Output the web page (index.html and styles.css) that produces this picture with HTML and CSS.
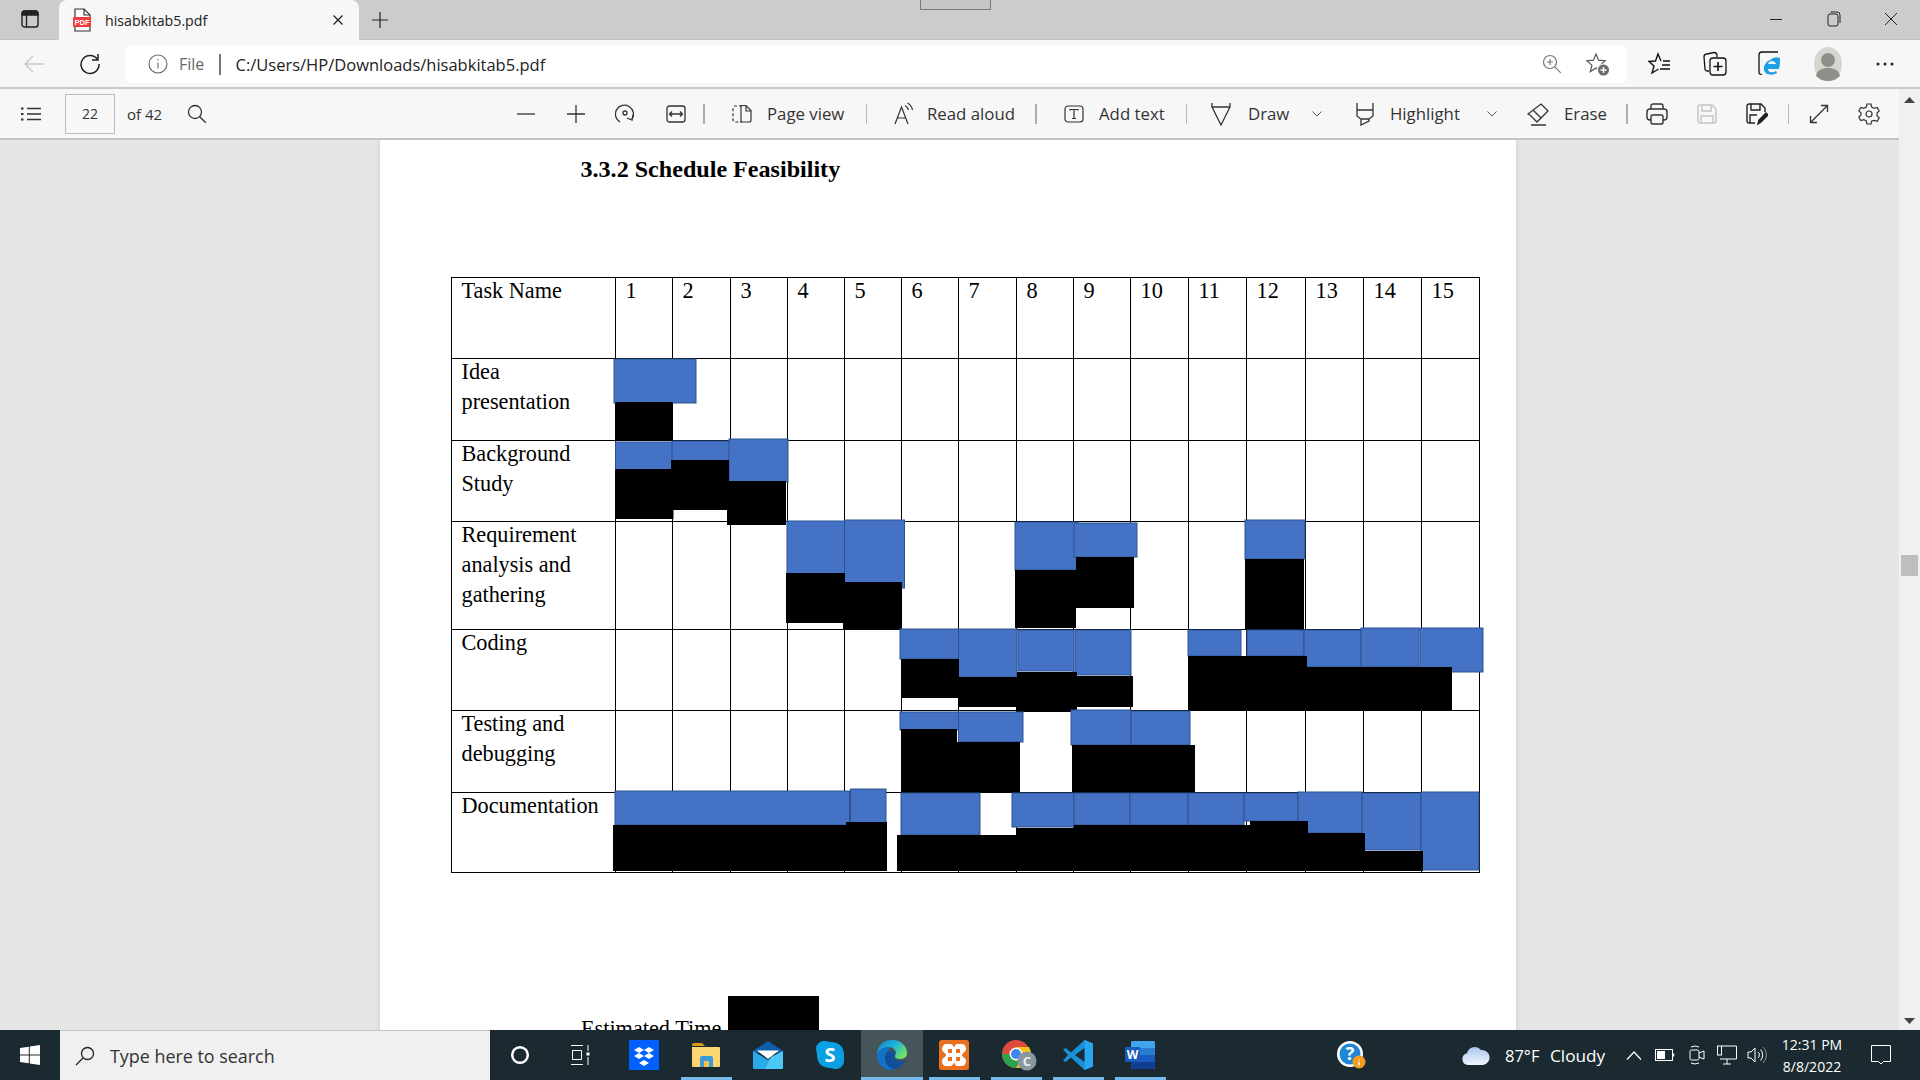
FILE: index.html
```html
<!DOCTYPE html>
<html lang="en">
<head>
<meta charset="utf-8">
<title>hisabkitab5.pdf</title>
<link rel="stylesheet" href="styles.css">
</head>
<body>
<div class="window">
  <header class="tabstrip">
    <div class="tab-toggle">
      <svg width="18" height="18" viewBox="0 0 18 18" fill="none" stroke="#222" stroke-width="1.4"><rect x="1" y="1" width="16" height="16" rx="2.5"/><path d="M5.5 5v12"/><path d="M1 3.5a2.5 2.5 0 0 1 2.5-2.5h11A2.5 2.5 0 0 1 17 3.5V5H1z" fill="#222"/></svg>
    </div>
    <div class="tab">
      <svg class="tab-icon" width="20" height="24" viewBox="0 0 20 24"><path d="M3 1h9l6 6v16H3z" fill="#fff" stroke="#333" stroke-width="1.2"/><path d="M12 1v6h6" fill="none" stroke="#333" stroke-width="1.2"/><rect x="1" y="9" width="18" height="10" rx="1" fill="#ee3b3b"/><text x="10" y="17" class="pdf-mark">PDF</text></svg>
      <span class="tab-title">hisabkitab5.pdf</span>
      <svg class="tab-close" width="12" height="12" viewBox="0 0 12 12" stroke="#222" stroke-width="1.3"><path d="M1.5 1.5l9 9M10.500 1.500l-9 9"/></svg>
    </div>
    <svg class="new-tab" width="18" height="18" viewBox="0 0 18 18" stroke="#222" stroke-width="1.2"><path d="M9 1v16M1 9h16"/></svg>
    <div class="snap-handle"></div>
    <div class="win-controls">
      <svg width="14" height="14" viewBox="0 0 14 14" stroke="#222" stroke-width="1"><path d="M1 7.500h12"/></svg>
      <svg width="14" height="16" viewBox="0 0 14 16" fill="none" stroke="#222" stroke-width="1"><rect x="1" y="3" width="10" height="12" rx="2"/><path d="M3.500 1h6.500a3 3 0 0 1 3 3v8"/></svg>
      <svg width="14" height="14" viewBox="0 0 14 14" stroke="#222" stroke-width="1"><path d="M1 1l12 12M13 1L1 13"/></svg>
    </div>
  </header>

  <nav class="navbar">
    <svg class="nav-back" width="22" height="20" viewBox="0 0 22 20" fill="none" stroke="#c9c9c9" stroke-width="1.4"><path d="M21 10H2M10 2l-8 8 8 8"/></svg>
    <svg class="nav-reload" width="22" height="22" viewBox="0 0 22 22" fill="none" stroke="#222" stroke-width="1.5"><path d="M18.500 6.500A9 9 0 1 0 20 11"/><path d="M13 7h6V1"/></svg>
    <div class="address">
      <svg class="addr-info" width="20" height="20" viewBox="0 0 20 20" fill="none" stroke="#666" stroke-width="1.1"><circle cx="10" cy="10" r="9"/><path d="M10 8.500v6"/><path d="M10 5v1.500"/></svg>
      <span class="addr-file">File</span>
      <span class="addr-sep"></span>
      <span class="addr-url">C:/Users/HP/Downloads/hisabkitab5.pdf</span>
      <svg class="addr-zoom" width="20" height="20" viewBox="0 0 20 20" fill="none" stroke="#777" stroke-width="1.2"><circle cx="8" cy="8" r="6.500"/><path d="M12.800 12.800l6 6M8 5v6M5 8h6"/></svg>
      <svg class="addr-star" width="24" height="24" viewBox="0 0 24 24" fill="none" stroke="#555" stroke-width="1.2"><path d="M10 2l2.600 6.200 6.600.5-5 4.400 1.600 6.500L10 16l-5.700 3.600 1.600-6.500-5-4.400 6.600-.5z"/><circle cx="17.500" cy="18" r="6.500" fill="#f7f7f7" stroke="none"/><circle cx="17.500" cy="18" r="5.500" fill="#6b6b6b" stroke="none"/><path d="M17.500 15v6M14.500 18h6" stroke="#fff" stroke-width="1.4"/></svg>
    </div>
    <div class="nav-tools">
      <svg width="24" height="24" viewBox="0 0 24 24" fill="none" stroke="#111" stroke-width="1.4"><path d="M13 9L10 2 7.500 9 1 9.500l5 4.500-2 7 6.500-4"/><path d="M15 9h7M14 13h8M12 17h10"/></svg>
      <svg width="24" height="26" viewBox="0 0 24 26" fill="none" stroke="#111" stroke-width="1.3"><path d="M6 20H4a2 2 0 0 1-2-2L1 6a3 3 0 0 1 3-3l7-1.500a3 3 0 0 1 3 2V6"/><rect x="7" y="7" width="16" height="17" rx="3"/><path d="M15 11v9M10.500 15.500h9" stroke-width="1.6"/></svg>
      <svg width="24" height="26" viewBox="0 0 24 26" fill="none"><path d="M4 23a2 2 0 0 1-3-2V4a3 3 0 0 1 3-3h16" stroke="#111" stroke-width="1.3"/><path d="M22 7a10 10 0 0 0-10 2 9 9 0 0 0-6 10c1 5 8 6 13 3l-1-2c-3 2-8 2-8-2h11c1-4 1-8 1-11zM10 13c1-4 7-4 8 0z" fill="#1b9fe8" fill-rule="evenodd"/></svg>
      <svg class="avatar" width="30" height="34" viewBox="0 0 30 34"><ellipse cx="15" cy="17" rx="14" ry="17" fill="#d6d6d0"/><circle cx="15" cy="13" r="7" fill="#8f8f8a"/><path d="M3 29c1-6 6-8 12-8s11 2 12 8c-3 3-7 5-12 5S6 32 3 29z" fill="#8f8f8a"/></svg>
      <svg class="nav-more" width="18" height="4" viewBox="0 0 18 4" fill="#222"><circle cx="2" cy="2" r="1.500"/><circle cx="9" cy="2" r="1.500"/><circle cx="16" cy="2" r="1.500"/></svg>
    </div>
  </nav>

  <div class="content-row">
    <div class="content-col">
      <div class="pdfbar">
        <svg class="pb-list" width="20" height="14" viewBox="0 0 20 14" stroke="#333" stroke-width="1.300"><path d="M6 1.500h14M6 7h14M6 12.500h14"/><path d="M0 1.500h2.500M0 7h2.500M0 12.500h2.500" stroke-width="2"/></svg>
        <div class="page-box">22</div>
        <span class="page-of">of 42</span>
        <svg class="pb-search" width="20" height="20" viewBox="0 0 20 20" fill="none" stroke="#333" stroke-width="1.300"><circle cx="8" cy="8" r="6.500"/><path d="M12.800 12.800l6 6"/></svg>

        <svg class="pb-minus" width="18" height="2" viewBox="0 0 18 2" stroke="#333" stroke-width="1.300"><path d="M0 1h18"/></svg>
        <svg class="pb-plus" width="18" height="18" viewBox="0 0 18 18" stroke="#333" stroke-width="1.300"><path d="M0 9h18M9 0v18"/></svg>
        <svg class="pb-rotate" width="20" height="22" viewBox="0 0 20 22" fill="none" stroke="#333" stroke-width="1.300"><path d="M5 19A9 9 0 1 1 17 16"/><circle cx="10" cy="10" r="2"/><path d="M12 15l5 2 1-5"/></svg>
        <svg class="pb-fit" width="20" height="18" viewBox="0 0 20 18" fill="none" stroke="#333" stroke-width="1.300"><rect x="1" y="1" width="18" height="16" rx="2.500"/><path d="M4 9h12M6 6.500L3.500 9 6 11.500M14 6.500L16.500 9 14 11.500"/></svg>
        <span class="tb-sep tb-sep-strong sep-a"></span>

        <div class="tool">
          <svg width="20" height="20" viewBox="0 0 20 20" fill="none" stroke="#333" stroke-width="1.200"><path d="M10 2H3a2 2 0 0 0-2 2v12a2 2 0 0 0 2 2h7" stroke-dasharray="3 2"/><path d="M9 1.500h5l5 5V16a2 2 0 0 1-2 2H9zM14 1.500V7h5"/></svg>
          <span class="tool-label w-page">Page view</span>
        </div>
        <span class="tb-sep"></span>
        <div class="tool tool-read">
          <svg width="20" height="24" viewBox="0 0 20 24" fill="none" stroke="#333" stroke-width="1.200"><path d="M1 22L7.500 5 14 22M3.500 16h8"/><path d="M11 3.500c2 1 3 2.500 3.500 4.500M13.500 1c2.500 1.500 4.500 4 5 7"/></svg>
          <span class="tool-label w-read">Read aloud</span>
        </div>
        <span class="tb-sep tb-sep-strong"></span>
        <div class="tool">
          <svg width="20" height="18" viewBox="0 0 20 18" fill="none" stroke="#333" stroke-width="1.200"><rect x="1" y="1" width="18" height="16" rx="3"/><path d="M6 5.500V4.500h8v1M10 4.500v9M8 13.500h4"/></svg>
          <span class="tool-label w-add">Add text</span>
        </div>
        <span class="tb-sep"></span>
        <div class="tool tool-split tool-draw">
          <svg width="20" height="24" viewBox="0 0 20 24" fill="none" stroke="#333" stroke-width="1.300"><path d="M1 1v4h18V1M1 5l9 18 9-18"/></svg>
          <span class="tool-label w-draw">Draw</span>
        </div>
        <svg class="chev" width="10" height="6" viewBox="0 0 10 6" fill="none" stroke="#555" stroke-width="1"><path d="M.5.500L5 5 9.500.500"/></svg>
        <div class="tool tool-split tool-hl">
          <svg width="20" height="24" viewBox="0 0 20 24" fill="none" stroke="#333" stroke-width="1.300"><path d="M2 1v7h16V1M2 8v6l4 3v6l8-4v-2l4-3V8M6 17h8"/></svg>
          <span class="tool-label w-high">Highlight</span>
        </div>
        <svg class="chev" width="10" height="6" viewBox="0 0 10 6" fill="none" stroke="#555" stroke-width="1"><path d="M.5.500L5 5 9.500.500"/></svg>
        <div class="tool tool-erase">
          <svg width="22" height="24" viewBox="0 0 22 24" fill="none" stroke="#333" stroke-width="1.300"><path d="M14 2l7 7-11 11-7-7-2-1zM6 8l8 8M4 23h15"/></svg>
          <span class="tool-label w-erase">Erase</span>
        </div>
        <span class="tb-sep tb-sep-strong"></span>
        <svg class="pb-print" width="22" height="22" viewBox="0 0 22 22" fill="none" stroke="#333" stroke-width="1.400"><path d="M5 6V3a2 2 0 0 1 2-2h8a2 2 0 0 1 2 2v3"/><rect x="1" y="6" width="20" height="11" rx="3"/><rect x="5" y="12" width="12" height="9" rx="1.500" fill="#f7f7f7"/></svg>
        <svg class="pb-save" width="20" height="20" viewBox="0 0 20 20" fill="none" stroke="#c4c4c4" stroke-width="1.400"><path d="M1 3a2 2 0 0 1 2-2h12l4 4v12a2 2 0 0 1-2 2H3a2 2 0 0 1-2-2zM5 1v6h9V1M4 19v-7h12v7"/></svg>
        <svg class="pb-saveas" width="22" height="22" viewBox="0 0 22 22" fill="none" stroke="#222" stroke-width="1.400"><path d="M9 20H3a2 2 0 0 1-2-2V3a2 2 0 0 1 2-2h12l4 4v4M5 1v6h9V1M4 20v-8h7"/><path d="M12 21l1-4 7-7 2 2-7 7z" fill="#222"/></svg>
        <span class="tb-sep sep-b"></span>
        <svg class="pb-expand" width="20" height="20" viewBox="0 0 20 20" fill="none" stroke="#333" stroke-width="1.300"><path d="M1.500 18.500l17-17M12 1.500h6.500V8M1.500 12v6.500H8"/></svg>
        <svg class="pb-gear" width="22" height="22" viewBox="0 0 22 22" fill="none" stroke="#333" stroke-width="1.200"><path d="M9 1h4l.7 3 2.500 1.400 3-.9 2 3.400-2.200 2.100v2.800l2.200 2.100-2 3.400-3-.9L13.700 18 13 21H9l-.7-3-2.500-1.400-3 .9-2-3.400L3 12V9.900L.8 7.800l2-3.400 3 .9L8.300 4z"/><circle cx="11" cy="11" r="3"/></svg>
      </div>

      <main class="viewer">
        <article class="page">
          <h2 class="page-heading">3.3.2 Schedule Feasibility</h2>
          <div class="gantt">
            <table class="gantt-table">
              <colgroup>
                <col class="c164"><col class="c57"><col class="c58"><col class="c57"><col class="c57"><col class="c57"><col class="c57"><col class="c58"><col class="c57"><col class="c57"><col class="c58"><col class="c58"><col class="c59"><col class="c58"><col class="c58"><col class="c58">
              </colgroup>
              <tr class="r81"><td>Task Name</td><td>1</td><td>2</td><td>3</td><td>4</td><td>5</td><td>6</td><td>7</td><td>8</td><td>9</td><td>10</td><td>11</td><td>12</td><td>13</td><td>14</td><td>15</td></tr>
              <tr class="r82"><td>Idea presentation</td><td></td><td></td><td></td><td></td><td></td><td></td><td></td><td></td><td></td><td></td><td></td><td></td><td></td><td></td><td></td></tr>
              <tr class="r81"><td>Background Study</td><td></td><td></td><td></td><td></td><td></td><td></td><td></td><td></td><td></td><td></td><td></td><td></td><td></td><td></td><td></td></tr>
              <tr class="r108"><td>Requirement analysis and gathering</td><td></td><td></td><td></td><td></td><td></td><td></td><td></td><td></td><td></td><td></td><td></td><td></td><td></td><td></td><td></td></tr>
              <tr class="r81"><td>Coding</td><td></td><td></td><td></td><td></td><td></td><td></td><td></td><td></td><td></td><td></td><td></td><td></td><td></td><td></td><td></td></tr>
              <tr class="r82"><td>Testing and debugging</td><td></td><td></td><td></td><td></td><td></td><td></td><td></td><td></td><td></td><td></td><td></td><td></td><td></td><td></td><td></td></tr>
              <tr class="r80"><td>Documentation</td><td></td><td></td><td></td><td></td><td></td><td></td><td></td><td></td><td></td><td></td><td></td><td></td><td></td><td></td><td></td></tr>
            </table>
            <svg class="gantt-bars" width="1029" height="595" viewBox="451 277 1029 595">
              <g class="bar-plan">
                <rect x="614" y="359" width="82" height="44"/>
                <rect x="615.500" y="442" width="57" height="28"/><rect x="672" y="441" width="58" height="20"/><rect x="729" y="439" width="59" height="43"/>
                <rect x="787" y="521" width="58" height="53"/><rect x="844.500" y="520" width="60" height="68"/>
                <rect x="1015" y="522" width="63" height="48"/><rect x="1074" y="523" width="63" height="34"/><rect x="1245" y="520" width="60" height="39"/>
              </g>
              <g class="bar-done">
                <rect x="615.500" y="402" width="57" height="39"/>
                <rect x="615.500" y="469" width="58" height="50"/><rect x="671" y="460" width="58" height="50"/><rect x="727" y="481" width="59" height="44"/>
                <rect x="786" y="573" width="59" height="50"/><rect x="843" y="582" width="59" height="48"/>
                <rect x="1015" y="570" width="61" height="58"/><rect x="1076" y="557" width="58" height="51"/><rect x="1245" y="559" width="59" height="70"/>
              </g>
              <g class="bar-plan">
                <rect x="900" y="629" width="58.500" height="30"/><rect x="958.500" y="629" width="58.500" height="48"/><rect x="1018" y="630" width="56" height="41"/><rect x="1075" y="630" width="56" height="45"/>
                <rect x="1188" y="630" width="53" height="26"/><rect x="1247" y="630" width="57" height="26"/><rect x="1304" y="630" width="57" height="37"/><rect x="1361" y="628" width="58" height="39"/><rect x="1420" y="628" width="63" height="44"/>
              </g>
              <g class="bar-done">
                <rect x="901" y="659" width="58" height="39"/><rect x="958" y="677" width="59" height="30"/><rect x="1017" y="672" width="60" height="40"/><rect x="1076" y="676" width="57" height="31"/>
                <rect x="1188" y="656" width="119" height="55"/><rect x="1307" y="667" width="145" height="44"/>
              </g>
              <g class="bar-plan">
                <rect x="900" y="712" width="58.500" height="18"/><rect x="958.500" y="712" width="64.500" height="30"/><rect x="1071" y="710" width="60" height="35"/><rect x="1131" y="711" width="59" height="34"/>
              </g>
              <g class="bar-done">
                <rect x="901" y="729" width="56" height="64"/><rect x="957" y="742" width="63" height="51"/><rect x="1072" y="745" width="123" height="50"/>
              </g>
              <g class="bar-plan">
                <rect x="615" y="791" width="234.500" height="34"/><rect x="850.500" y="789" width="35.500" height="34"/><rect x="901" y="793" width="79" height="42"/>
                <rect x="1012" y="793" width="62" height="34"/><rect x="1074" y="793" width="56" height="32"/><rect x="1130" y="793" width="58" height="32"/><rect x="1188" y="793" width="56" height="32"/><rect x="1244" y="793" width="54" height="28"/><rect x="1298" y="792" width="64" height="41"/><rect x="1362" y="793" width="59" height="57"/><rect x="1421" y="792" width="58" height="78"/>
              </g>
              <g class="bar-done">
                <rect x="613" y="825" width="235" height="46"/><rect x="846" y="822" width="41" height="49"/><rect x="897" y="835" width="126" height="36"/>
                <rect x="1016" y="828" width="58" height="43"/><rect x="1074" y="825" width="176" height="46"/><rect x="1250" y="821" width="58" height="50"/><rect x="1308" y="833" width="57" height="38"/><rect x="1365" y="851" width="58" height="20"/>
              </g>
            </svg>
          </div>
          <div class="estimate">
            <span class="estimate-label">Estimated Time</span>
            <span class="estimate-box"></span>
          </div>
        </article>
      </main>
    </div>
    <aside class="scrollbar">
      <svg width="11" height="6" viewBox="0 0 11 6" fill="#444"><path d="M0 6L5.500 0 11 6z"/></svg>
      <div class="scroll-thumb"></div>
      <svg width="11" height="6" viewBox="0 0 11 6" fill="#444"><path d="M0 0l5.500 6L11 0z"/></svg>
    </aside>
  </div>

  <footer class="taskbar">
    <div class="start">
      <svg width="20" height="20" viewBox="0 0 20 20" fill="#fff"><path d="M0 3l8.800-1.300v7.800H0zM9.800 1.500L20 0v9.500H9.800zM0 10.500h8.800v7.800L0 17zM9.800 10.500H20V20L9.800 18.500z"/></svg>
    </div>
    <div class="searchbox">
      <svg width="20" height="20" viewBox="0 0 20 20" fill="none" stroke="#222" stroke-width="1.300"><circle cx="12.500" cy="7.500" r="6"/><path d="M8 12L1 19"/></svg>
      <span>Type here to search</span>
    </div>
    <div class="slot slot-60">
      <svg width="20" height="20" viewBox="0 0 20 20" fill="none" stroke="#fff" stroke-width="2.500"><circle cx="10" cy="10" r="7.800"/></svg>
    </div>
    <div class="slot slot-60">
      <svg width="20" height="22" viewBox="0 0 20 22" fill="none" stroke="#fff" stroke-width="1"><path d="M1 1.500h12M1 20.500h12M2.500 6.500h9v9h-9zM18 1v6M18 13v8"/><rect x="16.500" y="8.500" width="3" height="3" fill="#fff" stroke="none"/></svg>
    </div>
    <div class="slot app app-first">
      <svg width="30" height="30" viewBox="0 0 30 30"><rect width="30" height="30" fill="#0061fe"/><path d="M10 7l5 3-5 3-5-3zM20 7l5 3-5 3-5-3zM10 13l5 3-5 3-5-3zM20 13l5 3-5 3-5-3zM15 20l5 3-5 3-5-3z" fill="#fff"/></svg>
    </div>
    <div class="slot app is-open">
      <svg width="30" height="26" viewBox="0 0 30 26"><path d="M1 3a2 2 0 0 1 2-2h8l3 3h-13z" fill="#d89a14"/><path d="M1 5h27a1 1 0 0 1 1 1v18a1 1 0 0 1-1 1H2a1 1 0 0 1-1-1z" fill="#fcd670"/><path d="M9 25v-9a2 2 0 0 1 2-2h9a2 2 0 0 1 2 2v9h-4v-6h-5v6z" fill="#3f9ad9"/><rect x="13" y="19" width="5" height="6" fill="#f2c14e"/></svg>
    </div>
    <div class="slot app">
      <svg width="30" height="28" viewBox="0 0 30 28"><path d="M15 0L0 10v2h30v-2z" fill="#0f5fa8"/><path d="M4 9.500h22L15 18z" fill="#fff"/><path d="M0 10l15 9 15-9v17a1 1 0 0 1-1 1H1a1 1 0 0 1-1-1z" fill="#2aa9e8"/><path d="M30 10v17a1 1 0 0 1-1 1H12l6-12z" fill="#4cc8f5"/></svg>
    </div>
    <div class="slot app">
      <svg width="28" height="28" viewBox="0 0 28 28"><path d="M9 0c3 0 3 1 6 1 8 0 13 5 13 13 0 3 0 4 0 6a8 8 0 0 1-9 8c-2 0-3-1-5-1C6 27 1 22 1 14c0-3-1-4-1-6a8 8 0 0 1 9-8z" fill="#0b9fe3"/><text x="14" y="21" class="skype-mark">S</text></svg>
    </div>
    <div class="slot app is-open is-active">
      <svg width="30" height="30" viewBox="0 0 30 30"><defs><linearGradient id="edgeA" x1="0" y1="0" x2="1" y2=".6"><stop offset="0" stop-color="#1a80d0"/><stop offset=".55" stop-color="#1cb4d8"/><stop offset="1" stop-color="#6fe06a"/></linearGradient></defs><path d="M15 0c9 0 15 6 15 13 0 4-3 6-7 6-3 0-5-1-5-3 0-1 1-2 1-3 0-3-3-6-7-6C6 7 0 12 0 15 0 6 6 0 15 0z" fill="url(#edgeA)"/><path d="M0 15c0-4 5-8 12-8 2 2-4 5-4 11 0 6 5 11 11 11-1 .5-3 1-5 1C6 30 0 23 0 15z" fill="#1172c9"/><path d="M8 18c0-5 4-8 8-7 2 1 2 2 2 3s-1 2-1 3c0 3 3 4 6 4 3 0 5-1 6-2-2 5-6 9-11 10-6 0-10-5-10-11z" fill="#0f4e9c"/></svg>
    </div>
    <div class="slot app is-open">
      <svg width="30" height="30" viewBox="0 0 30 30"><rect width="30" height="30" rx="2.500" fill="#e8701f"/><path d="M7 4h5c2 0 2 3 3 3s1-3 3-3h5c3 0 4 3 4 5 0 3-4 4-4 6s4 3 4 6-2 5-4 5h-5c-2 0-2-3-3-3s-1 3-3 3H7c-3 0-4-3-4-5 0-3 4-4 4-6S3 12 3 9s2-5 4-5z" fill="#fff"/><path d="M9 9h4v4H9zM17 9h4v4h-4zM9 17h4v4H9zM17 17h4v4h-4z" fill="#e8701f"/></svg>
    </div>
    <div class="slot app is-open">
      <svg class="chrome" width="36" height="32" viewBox="0 0 36 32"><circle cx="15" cy="15" r="14" fill="#de4b3e"/><path d="M15 15L1 15a14 14 0 0 0 14 14l7-12z" fill="#2ca24c"/><path d="M15 8h13a14 14 0 0 1-13 21l7-12z" fill="#f5c21b"/><circle cx="15" cy="15" r="6.500" fill="#fff"/><circle cx="15" cy="15" r="5" fill="#4285f4"/><circle cx="26" cy="22" r="9.500" fill="#8a979f"/><text x="26" y="27" class="chrome-mark">C</text></svg>
    </div>
    <div class="slot app is-open">
      <svg width="30" height="30" viewBox="0 0 30 30"><path d="M21.500 0L30 3.500v23L21.500 30 8 17.500 2.500 22 0 20.500 5 15 0 9.500 2.500 8 8 12.500z" fill="#1a8fd9"/><path d="M21.500 0L30 3.500v23L21.500 30z" fill="#2aa6ee"/><path d="M21.500 8v14L12 15z" fill="#1b2a30"/></svg>
    </div>
    <div class="slot app is-open">
      <svg width="30" height="28" viewBox="0 0 30 28"><rect x="6" y="0" width="24" height="28" rx="1.500" fill="#41a5ee"/><rect x="6" y="7" width="24" height="7" fill="#2b7cd3"/><rect x="6" y="14" width="24" height="7" fill="#185abd"/><path d="M6 21h24v5.500a1.500 1.500 0 0 1-1.500 1.500h-21A1.500 1.500 0 0 1 6 26.500z" fill="#103f91"/><rect x="0" y="6" width="15" height="15" rx="1" fill="#185abd"/><text x="7.500" y="18" class="word-mark">W</text></svg>
    </div>
    <div class="tray">
      <div class="tray-help">
        <svg width="30" height="32" viewBox="0 0 30 32"><circle cx="14" cy="15" r="13" fill="#fff"/><circle cx="14" cy="15" r="10.500" fill="#1e88d6"/><text x="14" y="21" class="help-mark">?</text><circle cx="23" cy="23" r="6.500" fill="#f39c1f"/><path d="M23 20.500v1M23 23v3.500" stroke="#fff" stroke-width="1.500"/></svg>
      </div>
      <svg class="tray-cloud" width="28" height="20" viewBox="0 0 28 20"><defs><linearGradient id="cloudA" x1="0" y1="0" x2="0" y2="1"><stop offset="0" stop-color="#a9c7f2"/><stop offset="1" stop-color="#f1f5fb"/></linearGradient></defs><path d="M6 20a6 6 0 0 1-1-11.800A8 8 0 0 1 19 5a7.500 7.500 0 1 1 2 15z" fill="url(#cloudA)"/></svg>
      <span class="tray-temp">87°F</span>
      <span class="tray-cond">Cloudy</span>
      <svg class="tray-caret" width="16" height="9" viewBox="0 0 16 9" fill="none" stroke="#fff" stroke-width="1.200"><path d="M1 8.500L8 1l7 7.500"/></svg>
      <svg class="tray-batt" width="20" height="12" viewBox="0 0 20 12" fill="none" stroke="#fff" stroke-width="1"><rect x=".5" y=".5" width="17" height="11"/><rect x="2" y="2" width="8" height="8" fill="#fff" stroke="none"/><path d="M18.500 4.500v3" stroke-width="1.500"/></svg>
      <svg class="tray-meet" width="16" height="22" viewBox="0 0 16 22" fill="none" stroke="#fff" stroke-width="1"><path d="M2 3a9 9 0 0 1 8 0M2 19a9 9 0 0 0 8 0"/><rect x="1" y="6" width="9" height="10" rx="1.500"/><path d="M10 9l5-2v8l-5-2"/></svg>
      <svg class="tray-net" width="20" height="20" viewBox="0 0 20 20" fill="none" stroke="#fff" stroke-width="1"><path d="M5 1h14.500v13H3M6 19h8M10 14v5"/><rect x=".5" y="1" width="4" height="9"/></svg>
      <svg class="tray-vol" width="20" height="18" viewBox="0 0 20 18" fill="none" stroke="#fff" stroke-width="1"><path d="M1 6h3l4-4v14l-4-4H1zM11 6a4 4 0 0 1 0 6M13.500 3.500a8 8 0 0 1 0 11"/><path d="M16 1a11 11 0 0 1 0 16" stroke="#8a9498"/></svg>
      <div class="clock"><span>12:31 PM</span><span>8/8/2022</span></div>
      <svg class="tray-notif" width="20" height="20" viewBox="0 0 20 20" fill="none" stroke="#fff" stroke-width="1"><path d="M.5.500h19v16h-7L10 19l-2.500-2.500h-7z"/></svg>
    </div>
  </footer>
</div>
</body>
</html>
```

FILE: styles.css
```css
* { box-sizing: border-box; }
html, body { margin: 0; height: 100%; overflow: hidden; }
body { font-family: "Open Sans", "Noto Sans", sans-serif; color: #333; }
svg { display: block; flex: none; }

.window { display: flex; flex-direction: column; height: 100vh; width: 100vw; }

/* Tab strip */
.tabstrip { position: relative; display: flex; align-items: center; height: 40px; background: #cccccc; flex: none; border-bottom: 1px solid #c2c2c2; }
.tab-toggle { width: 59px; display: flex; justify-content: center; padding-bottom: 2px; }
.tab { position: relative; display: flex; align-items: center; width: 300px; height: 40px; background: #f7f7f7; border-radius: 8px 8px 0 0; padding-left: 13px; margin-bottom: -1px; }
.tab-title { margin-left: 13px; font-size: 14.200px; color: #222; flex: 1; }
.tab-close { margin-right: 15px; }
.pdf-mark { font: bold 7.500px "Liberation Sans", sans-serif; fill: #fff; text-anchor: middle; }
.new-tab { margin-left: 12px; }
.snap-handle { position: absolute; left: 920px; top: -1px; width: 71px; height: 11px; background: #c6c6c6; border: 1px solid #7b7b7b; }
.win-controls { margin-left: auto; width: 172px; padding: 0 22px 2px 21px; display: flex; justify-content: space-between; align-items: center; }

/* Navigation */
.navbar { display: flex; align-items: center; height: 49px; flex: none; background: #f7f7f7; border-bottom: 2px solid #c8c8c8; padding-top: 1px; }
.nav-back { margin-left: 23px; }
.nav-reload { margin-left: 34px; margin-right: 25px; }
.address { display: flex; align-items: center; width: 1500px; height: 38px; background: #fff; border-radius: 4px; padding-left: 22px; }
.addr-file { margin-left: 11px; font-size: 16px; color: #666; width: 29px; }
.addr-sep { width: 1.500px; height: 21px; background: #777; margin: 0 15px 0 11px; }
.addr-url { font-size: 16.500px; color: #222; width: 312px; white-space: nowrap; flex: none; }
.addr-zoom { margin-left: auto; }
.addr-star { margin: 0 16px 0 24px; }
.nav-tools { display: flex; align-items: center; gap: 31px; padding-left: 22px; flex: none; }
.nav-more { margin-left: 2px; }

/* Main area */
.content-row { flex: 1; min-height: 0; display: flex; }
.content-col { flex: 1; min-width: 0; display: flex; flex-direction: column; }
.scrollbar { width: 21px; background: #f0f0f0; display: flex; flex-direction: column; align-items: center; padding: 8px 0 6px; flex: none; }
.scroll-thumb { width: 17px; height: 21px; background: #bebebe; margin: 452px 0 auto; }

/* PDF toolbar */
.pdfbar { display: flex; align-items: center; height: 51px; flex: none; background: #f7f7f7; border-bottom: 2px solid #c4c4c4; }
.pb-list { margin-left: 21px; }
.page-box { width: 50px; height: 40px; margin-left: 24px; border: 1px solid #bbb; background: #f8f8f8; display: flex; align-items: center; justify-content: center; font-size: 14px; }
.page-of { margin-left: 12px; width: 35px; font-size: 15px; white-space: nowrap; }
.pb-search { margin-left: 25px; }
.pb-minus { margin-left: 310px; }
.pb-plus { margin-left: 32px; }
.pb-rotate { margin-left: 30px; }
.pb-fit { margin-left: 31px; }
.tb-sep { width: 1px; height: 20px; background: #b8b8b8; flex: none; }
.tb-sep-strong { width: 2px; background: #adadad; }
.sep-a { margin-left: 17px; }
.tool { display: flex; align-items: center; gap: 15px; padding: 0 22px 0 27px; flex: none; }
.tool-read { gap: 13px; }
.tool-split { padding-right: 0; }
.tool-draw { padding-left: 24px; gap: 17px; }
.tool-hl { padding-left: 33px; }
.tool-erase { padding-left: 30px; }
.tool-label { font-size: 16.800px; color: #333; white-space: nowrap; }
.w-page { width: 77px; }
.w-read { width: 86px; }
.w-add { width: 65px; }
.w-draw { width: 40px; }
.w-high { width: 73px; }
.w-erase { width: 40px; }
.chev { margin-left: 24px; }
.pb-print { margin-left: 18px; }
.pb-save { margin-left: 29px; }
.pb-saveas { margin-left: 29px; }
.sep-b { margin-left: 20px; }
.pb-expand { margin-left: 20px; }
.pb-gear { margin-left: 29px; }

/* Viewer */
.viewer { flex: 1; min-height: 0; overflow: hidden; background: #e6e6e6; padding-left: 380px; }
.page { width: 1136px; height: 1000px; background: #fff; box-shadow: 2px 0 3px rgba(0,0,0,.06), -2px 0 3px rgba(0,0,0,.06); padding-left: 71px; padding-top: 14px; font-family: "Liberation Serif", serif; color: #000; }
.page-heading { margin: 0 0 93px 129.500px; font-size: 24.100px; line-height: 30px; font-weight: bold; }
.gantt { position: relative; width: 1029px; }
.gantt-table { border-collapse: collapse; table-layout: fixed; width: 1029px; font-size: 22.250px; line-height: 30px; }
.gantt-table td { border: 1px solid #000; vertical-align: top; padding: 0 4px 0 9.500px; }
.gantt-table td::before { content: ""; display: block; margin-top: -2px; }
.c164 { width: 164px; }
.c57 { width: 57px; }
.c58 { width: 58px; }
.c59 { width: 59px; }
.r80 { height: 80px; }
.r81 { height: 81px; }
.r82 { height: 82px; }
.r108 { height: 108px; }
.gantt-bars { position: absolute; left: 0; top: 0; overflow: visible; }
.bar-plan rect { fill: #4472c4; stroke: #2f528f; stroke-width: 1; }
.bar-done rect { fill: #000; }
.estimate { display: flex; gap: 7px; margin: 123px 0 0 130px; font-size: 22.250px; line-height: 30px; }
.estimate-label { margin-top: 18px; white-space: nowrap; }
.estimate-box { width: 91px; height: 60px; background: #000; }

/* Taskbar */
.taskbar { display: flex; align-items: stretch; height: 50px; flex: none; background: #1b2a30; color: #fff; }
.start { width: 60px; display: flex; align-items: center; justify-content: center; }
.searchbox { width: 430px; display: flex; align-items: center; gap: 15px; padding-left: 15px; background: #f0f0f0; color: #333; font-size: 17.900px; border-top: 1px solid #c4c4c4; }
.slot { display: flex; align-items: center; justify-content: center; flex: none; position: relative; }
.slot-60 { width: 60px; }
.app { width: 62px; }
.app-first { margin-left: 3px; }
.is-open::after { content: ""; position: absolute; left: 5.500px; right: 5.500px; bottom: 0; height: 3px; background: #76b9ed; }
.is-active { background: #46555a; }
.is-active::after { left: 0; right: 0; }
.chrome { margin-left: 6px; }
.skype-mark { font: bold 20px "Open Sans", sans-serif; fill: #fff; text-anchor: middle; }
.chrome-mark { font: bold 13px "Open Sans", sans-serif; fill: #e8ecef; text-anchor: middle; }
.word-mark { font: bold 12px "Open Sans", sans-serif; fill: #fff; text-anchor: middle; }
.help-mark { font: bold 18px "Open Sans", sans-serif; fill: #fff; text-anchor: middle; }

.tray { margin-left: auto; display: flex; align-items: center; width: 599px; flex: none; }
.tray-help { width: 60px; display: flex; justify-content: center; }
.tray-cloud { margin-left: 81px; }
.tray-temp { margin-left: 15px; font-size: 16.500px; width: 35px; white-space: nowrap; }
.tray-cond { margin-left: 10px; font-size: 17.200px; width: 56px; white-space: nowrap; }
.tray-caret { margin-left: 20px; }
.tray-batt { margin-left: 13px; }
.tray-meet { margin-left: 14px; }
.tray-net { margin-left: 12px; }
.tray-vol { margin-left: 10px; }
.clock { width: 62px; margin-left: 14px; display: flex; flex-direction: column; align-items: center; gap: 3px; font-size: 14px; line-height: 19px; white-space: nowrap; }
.tray-notif { margin-left: 28px; }
```
